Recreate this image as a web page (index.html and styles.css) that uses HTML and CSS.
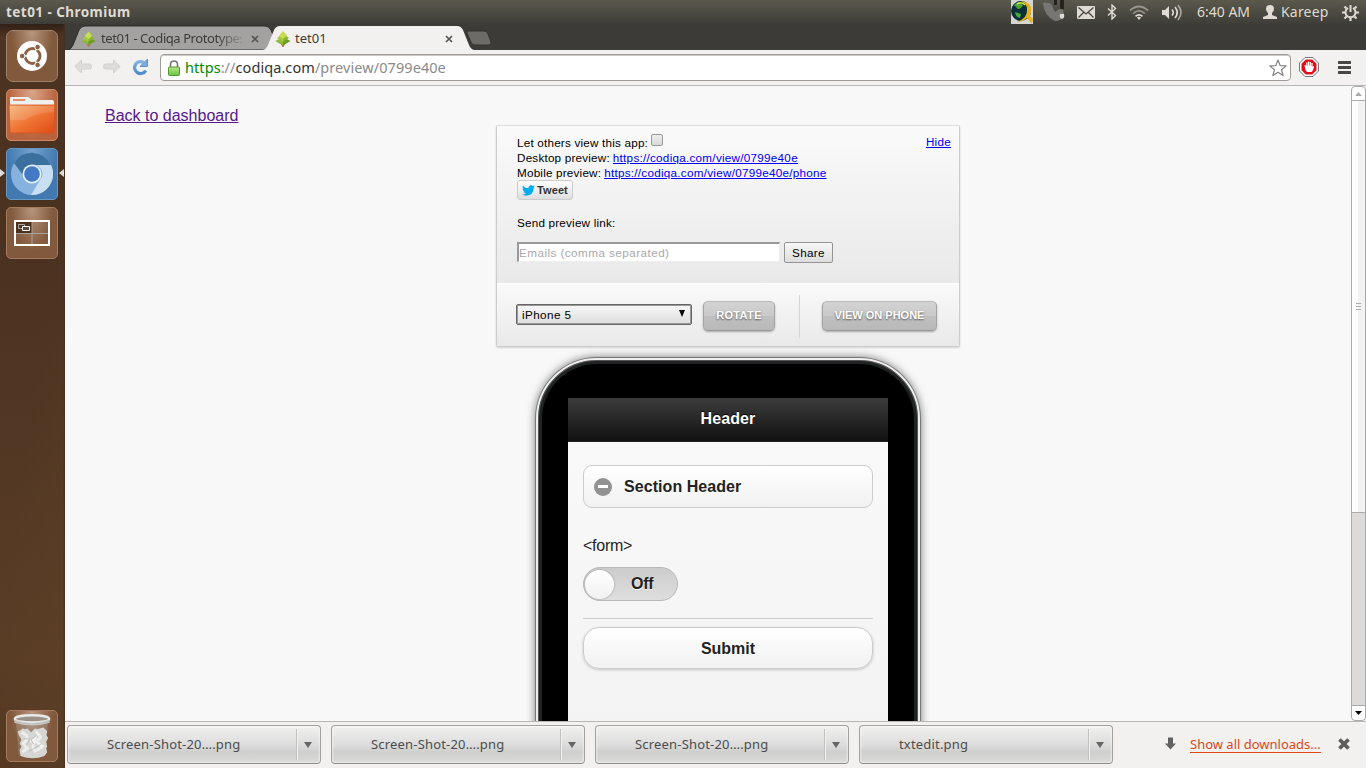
FILE: index.html
```
<!DOCTYPE html>
<html lang="en">
<head>
<meta charset="utf-8">
<title>tet01 - Chromium</title>
<link rel="stylesheet" href="styles.css">
</head>
<body>
<svg class="defs" width="0" height="0">
  <defs>
    <linearGradient id="folderFill" x1="0" y1="0" x2="1" y2="1"><stop offset="0" stop-color="#f5b173"/><stop offset=".5" stop-color="#ef7535"/><stop offset="1" stop-color="#e04a16"/></linearGradient>
    <linearGradient id="reloadFill" x1="0" y1="0" x2="0" y2="1"><stop offset="0" stop-color="#7fb0e2"/><stop offset="1" stop-color="#4f8bcd"/></linearGradient>
    <linearGradient id="lockFill" x1="0" y1="0" x2="0" y2="1"><stop offset="0" stop-color="#b4e88a"/><stop offset="1" stop-color="#6cc043"/></linearGradient>
    <symbol id="leaf" viewBox="0 0 16 16">
      <path d="M5.500 12h5l-2 4h-1z" fill="#b4704a"/>
      <path d="M8 6l7.500 4L8 14.500.5 10z" fill="#6c9c22"/>
      <path d="M8 3l6 4-6 4-6-4z" fill="#8bb92e"/>
      <path d="M8 0l4 4.500L8 8 4 4.500z" fill="#c3dc51"/>
      <path d="M8 0v14L.5 10 3 8 2 7l2.500-2z" fill="#d0e45c" opacity=".4"/>
    </symbol>
    <symbol id="cross" viewBox="0 0 8 8"><path d="M1 1l6 6M7 1L1 7" stroke="#555" stroke-width="1.700"/></symbol>
    <symbol id="arrow" viewBox="0 0 18 16"><path d="M7.500 1L.8 7.500l6.700 6.500V10h8q2 0 2-2.500t-2-2.500h-8z" fill="#dedcda" stroke="#d3d1cf"/></symbol>
  </defs>
</svg>

<header class="panel">
  <span class="panel-title">tet01 - Chromium</span>
  <div class="indicators">
    <svg class="i-globe" width="22" height="24" viewBox="0 0 22 24"><rect width="22" height="24" fill="#d5d5d2"/><circle cx="10" cy="11" r="10" fill="#0b3038"/><path d="M3 5q5-5 9 0-2 4-5 4-3-3-4-4M4 12l6 2-1 4q-4 0-5-6" fill="#4da536"/><path d="M10 1q12 2 10 11l-1 4 3 3-1 4h-1l-4-5q-4 4-10 4 11-4 10-13 0-5-6-8" fill="#e6b21b"/><path d="M6 4q5-3 8 1" stroke="#d6e84b" stroke-width="1.500" fill="none"/></svg>
    <svg class="i-swirl" width="22" height="24" viewBox="0 0 22 24"><path d="M11 0h3v5h-3zM17 0h4v9h-4z" fill="#24231f"/><path d="M0 3q1-1 5 0 4 0 5 5l2 4q5-5 8-2l1 5q-2 6-9 6Q1 16 0 3" fill="#777672"/><path d="M17 14l4 0q1 4-2 5-3-1-2-5" fill="#dedbd2"/></svg>
    <svg class="i-mail" width="18" height="13" viewBox="0 0 18 13"><rect width="18" height="13" rx="1" fill="#dfdbd2"/><path d="M1.500 1.500L9 8l7.500-6.500M1.500 11.500l5-5M16.500 11.500l-5-5" fill="none" stroke="#4a4842" stroke-width="1.300"/></svg>
    <svg class="i-bt" width="10" height="16" viewBox="0 0 10 16"><path d="M1 4.500l7.500 7L5 15V1l3.500 3.500-7.500 7" fill="none" stroke="#dfdbd2" stroke-width="1.400"/></svg>
    <svg class="i-wifi" width="20" height="15" viewBox="0 0 20 15"><g fill="none" stroke="#dfdbd2" stroke-width="1.700"><path d="M1 5.500q9-8 18 0M4 8.700q6-5.500 12 0" opacity=".5"/><path d="M6.500 11.300q3.500-3 7 0"/></g><path d="M8 12.500q2-1.500 4 0L10 15z" fill="#dfdbd2"/></svg>
    <svg class="i-vol" width="20" height="17" viewBox="0 0 20 17"><path d="M0 6h3l4-4v13l-4-4H0z" fill="#dfdbd2"/><g fill="none" stroke="#dfdbd2" stroke-width="1.600"><path d="M10 5.500q2.500 3 0 6M13 3q4.500 5.500 0 11"/><path d="M16 1q6 7.500 0 15" opacity=".65"/></g></svg>
    <span class="clock">6:40 AM</span>
    <svg class="i-user" width="14" height="14" viewBox="0 0 14 14"><path d="M7 0q4 0 4 4 0 2.500-2 4v2l5 2v2H0v-2l5-2V8Q3 6.500 3 4q0-4 4-4" fill="#dfdbd2"/></svg>
    <span class="user">Kareep</span>
    <svg class="i-gear" width="17" height="17" viewBox="0 0 17 17"><g fill="none" stroke="#dfdbd2"><path d="M6 4A5 5 0 1 0 11 4" stroke-width="2"/><path d="M8.500 1v7" stroke-width="2"/><path d="M0 8.500h3M14 8.500h3M2.500 2.500l2 2M14.500 2.500l-2 2M2.500 14.500l2-2M14.500 14.500l-2-2M8.500 14v3" stroke-width="2.200"/></g></svg>
  </div>
</header>

<div class="desktop">
  <nav class="launcher">
    <div class="tile tile-dash"><svg width="30" height="30" viewBox="0 0 30 30"><circle cx="15" cy="15" r="15" fill="#fff"/><circle cx="15.500" cy="15" r="7.500" fill="none" stroke="#8b6243" stroke-width="3"/><path d="M15 15L3 15M15.500 15l6-10.500M15.500 15l6 10.500" stroke="#fff" stroke-width="1.300"/><circle cx="15.500" cy="15" r="5.800" fill="#fff"/><g fill="#8b6243" stroke="#fff"><circle cx="5.200" cy="15" r="2.800"/><circle cx="20.600" cy="6" r="2.800"/><circle cx="20.600" cy="24" r="2.800"/></g></svg></div>
    <div class="tile tile-files"><svg width="46" height="38" viewBox="0 0 46 38"><path d="M1 10V2q0-1 1-1h17l4 3h20q2 0 2 2v4H1z" fill="#f1efed"/><path d="M4 3h12v2H4z" fill="#e4916a"/><path d="M0 9h46l-1 27q0 1-1 1H2q-1 0-1-1z" fill="url(#folderFill)" stroke="#d7531d" stroke-width=".8"/><path d="M1 10h44v6Q25 17 16 24H1z" fill="#fff" opacity=".13"/></svg></div>
    <div class="tile tile-chromium"><svg width="44" height="44" viewBox="0 0 44 44"><circle cx="22" cy="22" r="21" fill="#86b2df"/><path d="M4 11A21 21 0 0 1 41 13H22a9 9 0 0 0-9 10z" fill="#3c709f"/><path d="M41 13A21 21 0 0 1 21 43l9-15a9 9 0 0 0-8-15z" fill="#c9dff1"/><circle cx="22" cy="22" r="9.500" fill="#e4f0fa"/><circle cx="22" cy="22" r="7.800" fill="#4379c5"/></svg></div>
    <div class="tile tile-spaces"><svg width="36" height="26" viewBox="0 0 36 26"><rect x="1" y="1" width="34" height="24" fill="none" stroke="#fff" stroke-width="2"/><path d="M2 2h16v11H2z" fill="#4f321e"/><path d="M18 2v22M2 13.500h32" stroke="#a9a099"/><path d="M4.500 4.500h6v4h-6z" fill="none" stroke="#aaa"/><path d="M8.500 6.500h7v4h-7z" fill="#5b4a3f" stroke="#fff"/></svg></div>
    <div class="tile tile-trash"><svg width="38" height="46" viewBox="0 0 40 48"><path d="M3 8h34l-3 36q-14 5-28 0z" fill="#aaa39d" opacity=".35"/><path d="M5 19l3-1 2-2 3 1 2-1 2 2 2 2 4-4 3 1 2-1 4-1 4 4-1 4 2 3-2 4 1 5-1 2 1 4-3 4q-12 5-25 0l-1-6 2-4-2-3 2-4-3-5z" fill="#d6d7d4"/><path d="M9 20l5 3 1 4-4 5 4 5-5 4M24 19l5 6-4 5 6 5-6 4M18 30l5-3-2 9 3 5" fill="none" stroke="#efefed" stroke-width="3"/><path d="M11 27l7 0-4 7M25 23l-6 5 3 5M30 32l-4 3-9 5" fill="none" stroke="#bfc0bc"/><ellipse cx="20" cy="6" rx="18" ry="3.800" fill="#9b9088" stroke="#e9e9e7" stroke-width="2.500"/><path d="M1.500 7q18 7 37 0v3q-18 6-37 0z" fill="#c3c4c0"/></svg></div>
  </nav>

  <main class="window">
    <div class="tabstrip">
      <svg class="tab-shapes" width="440" height="26" viewBox="0 0 440 26">
        <path d="M0 26q4 0 6-5l6-15q2-4 6-4h180q4 0 6 4l6 15q2 5 6 5z" fill="#a3a2a0" stroke="#2f2e2b"/>
        <path d="M195 26q4 0 6-5l6-15q2-4 6-4h177q4 0 6 4l6 15q2 5 6 5z" fill="#f2f1f0"/>
        <path d="M401 7h16q3 0 4 3l3 8q1 3-2 3h-14q-3 0-4-3l-4-9q0-2 1-2z" fill="#6c6b67" stroke="#33322e"/>
      </svg>
      <div class="tab tab-back"><svg width="15" height="16"><use href="#leaf"/></svg><span class="tab-label faded">tet01 - Codiqa Prototypes</span><svg width="8" height="8"><use href="#cross"/></svg></div>
      <div class="tab tab-front"><svg width="16" height="16"><use href="#leaf"/></svg><span class="tab-label">tet01</span><svg width="8" height="8"><use href="#cross"/></svg></div>
    </div>

    <div class="toolbar">
      <svg class="nav-back" width="18" height="16"><use href="#arrow"/></svg>
      <svg class="nav-forward" width="18" height="16"><use href="#arrow"/></svg>
      <svg class="nav-reload" width="17" height="18" viewBox="0 0 17 18"><path d="M13.800 12.500A6 6 0 1 1 11.500 4.300" fill="none" stroke="url(#reloadFill)" stroke-width="3.200"/><path d="M15.500 1v7.500H8z" fill="#7aabdd" stroke="#5e94cf"/></svg>
      <div class="omnibox">
        <svg width="12" height="16" viewBox="0 0 12 16"><path d="M2.500 8V4.500q0-3.500 3.500-3.500t3.500 3.500V8" fill="none" stroke="#777" stroke-width="1.600"/><rect x=".5" y="7" width="11" height="8.500" rx="1" fill="url(#lockFill)" stroke="#4e9a2e"/></svg>
        <span class="url"><span class="scheme">https</span>://<span class="host">codiqa.com</span>/preview/0799e40e</span>
        <svg width="18" height="18" viewBox="0 0 18 18"><path d="M9 1l2.200 5.600 6 .3-4.700 3.800 1.600 5.900L9 13.300l-5.100 3.300 1.600-5.900L.8 6.900l6-.3z" fill="#fff" stroke="#818181" stroke-width="1.200" stroke-linejoin="round"/></svg>
      </div>
      <svg class="adblock" width="20" height="20" viewBox="0 0 20 20"><path d="M6 .5h8L19.500 6v8L14 19.500H6L.5 14V6z" fill="#fff" stroke="#777"/><path d="M6.800 2.500h6.400l4.300 4.300v6.400l-4.300 4.300H6.800l-4.300-4.300V6.800z" fill="#dc1018"/><path d="M5.500 8.500l1-.5.700 1V5.500h1.200v3h.5V4.500h1.300v4h.5V5h1.200v4h.5V6h1.200v4l1-1 .7.500-1.500 4-1 1.500H8l-1.500-2z" fill="#fff"/></svg>
      <svg class="menu" width="13" height="13" viewBox="0 0 13 13"><path d="M1 1.500h11M1 6.500h11M1 11.500h11" stroke="#464646" stroke-width="3" stroke-linecap="round"/></svg>
    </div>

    <div class="viewport">
      <div class="page">
        <a class="back-link" href="#">Back to dashboard</a>
        <section class="settings">
          <div class="sharing">
            <div class="info">
              <div class="line"><span>Let others view this app:</span><i class="check"></i><a class="hide" href="#">Hide</a></div>
              <div class="line"><span>Desktop preview:</span><a href="#">https://codiqa.com/view/0799e40e</a></div>
              <div class="line"><span>Mobile preview:</span><a href="#">https://codiqa.com/view/0799e40e/phone</a></div>
            </div>
            <div class="tweet"><svg width="13" height="11" viewBox="0 0 24 20"><path d="M24 2.400q-1.500.8-2.800.8Q22.700 2.200 23.300.5q-1.500.9-3.100 1.200A5 5 0 0 0 11.900 6Q5.500 5.700 1.700 1A5 5 0 0 0 3.200 7.500Q2 7.400 1 6.900q0 3.800 3.900 4.900-1 .3-2.200.1 1.200 3.200 4.600 3.400Q4.400 17.800 0 17.400 3.500 19.500 7.500 19.500 21.500 19 21.500 5 22.900 4 24 2.400" fill="#00aced"/></svg><span>Tweet</span></div>
            <div class="send-label">Send preview link:</div>
            <div class="send"><div class="email">Emails (comma separated)</div><div class="share">Share</div></div>
          </div>
          <div class="controls">
            <div class="select"><span>iPhone 5</span><i class="caret"></i></div>
            <div class="btn rotate">ROTATE</div>
            <i class="divider"></i>
            <div class="btn view">VIEW ON PHONE</div>
          </div>
        </section>
        <section class="phone">
          <div class="bezel">
            <div class="screen">
              <div class="app-header">Header</div>
              <div class="app-body">
                <div class="section-header"><svg width="18" height="18" viewBox="0 0 18 18"><circle cx="9" cy="9" r="9" fill="#929292"/><path d="M4 7h10v3H4z" fill="#fff"/></svg><span>Section Header</span></div>
                <div class="form-text">&lt;form&gt;</div>
                <div class="toggle"><i class="knob"></i><span>Off</span></div>
                <div class="submit">Submit</div>
              </div>
            </div>
          </div>
        </section>
      </div>
      <div class="scrollbar">
        <div class="sb-up"><svg width="7" height="4" viewBox="0 0 7 4"><path d="M0 4l3.500-4L7 4z" fill="#aaa"/></svg></div>
        <div class="thumb"><i></i><i></i><i></i></div>
        <div class="track"></div>
        <div class="sb-down"><svg width="7" height="4" viewBox="0 0 7 4"><path d="M0 0l3.500 4L7 0z" fill="#000"/></svg></div>
      </div>
    </div>

    <footer class="downloads">
      <div class="download"><span>Screen-Shot-20….png</span><i class="sep"></i><i class="drop"></i></div>
      <div class="download"><span>Screen-Shot-20….png</span><i class="sep"></i><i class="drop"></i></div>
      <div class="download"><span>Screen-Shot-20….png</span><i class="sep"></i><i class="drop"></i></div>
      <div class="download"><span>txtedit.png</span><i class="sep"></i><i class="drop"></i></div>
      <svg class="dl-icon" width="11" height="13" viewBox="0 0 11 13"><path d="M3 .5h5v6h3L5.500 12.500 0 6.500h3z" fill="#626262"/></svg>
      <a class="show-all" href="#">Show all downloads...</a>
      <svg class="dl-close" width="12" height="12" viewBox="0 0 12 12"><path d="M1.500 1.500l9 9M10.500 1.500l-9 9" stroke="#5c5c5c" stroke-width="3.800"/></svg>
    </footer>
  </main>
</div>
</body>
</html>
```
FILE: styles.css
```
* { box-sizing: border-box; }
body { margin: 0; width: 1366px; height: 768px; overflow: hidden; font: 13px "Noto Sans", sans-serif; background: #f2f1f0; }
svg { display: block; flex: none; }
.defs { position: absolute; }

.panel { height: 24px; display: flex; align-items: center; justify-content: space-between; padding: 0 7px 0 6px; background: linear-gradient(#5b594c, #3e3d38); color: #dfdbd2; }
.panel-title { font-weight: 700; font-size: 13.500px; letter-spacing: .45px; white-space: nowrap; }
.indicators { display: flex; align-items: center; height: 24px; }
.i-swirl { margin-left: 10px; }
.i-mail { margin-left: 12px; }
.i-bt { margin-left: 12px; }
.i-wifi { margin-left: 12px; }
.i-vol { margin-left: 13px; }
.clock { width: 53px; margin: -2px 0 0 15px; font-size: 14px; white-space: nowrap; }
.i-user { margin-left: 13px; }
.user { width: 47px; margin: -2px 0 0 4px; font-size: 14px; letter-spacing: .2px; white-space: nowrap; }
.i-gear { margin-left: 14px; }

.desktop { display: flex; height: 744px; }
.launcher { width: 65px; flex: none; padding: 6px; display: flex; flex-direction: column; gap: 7px; position: relative;
  background: linear-gradient(90deg, transparent 63px, #46301f 65px), linear-gradient(180deg, #302116 0, transparent 12px), linear-gradient(99deg, transparent 50%, rgba(95,66,38,.4) 100%), linear-gradient(180deg, #4c3322 0, #4b311f 30%, #533824 60%, #5a3d25 85%, #543722 100%); }
.tile { width: 52px; height: 52px; flex: none; border-radius: 5px; display: flex; align-items: center; justify-content: center; border: 1px solid #a57b5d; background: radial-gradient(ellipse at 50% 0, #b8957d 0, transparent 60%), #81593c; }
.tile-dash { border-radius: 7px; border-color: #a08066; }
.tile-files { background: radial-gradient(ellipse at 50% 0, #daa68b 0, transparent 70%), #b8633d; border-color: #d18a68; }
.tile-chromium { background: radial-gradient(ellipse at 50% 0, #75a3cd 0, transparent 70%), #4179b0; border-color: #6798c5; }
.tile-trash { margin-top: auto; }
.launcher::before, .launcher::after { content: ""; position: absolute; top: 145px; border: 4px solid transparent; }
.launcher::before { left: 0; border-left: 5px solid #ddd; border-right: 0; }
.launcher::after { right: 1px; border-right: 5px solid #ddd; border-left: 0; }

.window { flex: 1; min-width: 0; display: flex; flex-direction: column; }
.tabstrip { height: 26px; flex: none; position: relative; display: flex; background: #3c3b37; }
.tab-shapes { position: absolute; left: 2px; top: 0; }
.tab { position: relative; display: flex; align-items: center; height: 26px; padding-top: 3px; color: #3c3b37; }
.tab-back { width: 194px; padding-left: 16px; }
.tab-front { width: 194px; padding-left: 16px; }
.tab-label { margin: -2px 9px 0 4px; flex: 1; width: 0; white-space: nowrap; font-size: 13px; }
.tab-back .tab-label { letter-spacing: -.43px; font-size: 13px; margin-left: 5px; }
.faded { -webkit-mask-image: linear-gradient(90deg, #000 115px, transparent 146px); mask-image: linear-gradient(90deg, #000 115px, transparent 146px); }

.toolbar { height: 36px; flex: none; display: flex; align-items: center; padding: 0 15px 1px 9px; background: #f2f1f0; border-bottom: 1px solid #b8b7b5; }
.nav-forward { margin-left: 11px; transform: scaleX(-1); }
.nav-reload { margin-left: 11px; }
.omnibox { width: 1131px; height: 27px; margin: 1px 0 0 11px; border: 1px solid #9f9c98; border-radius: 4px; background: #fff; display: flex; align-items: center; padding: 0 3px 0 7px; box-shadow: inset 0 1px 0 #ccc9c6; }
.url { flex: 1; margin: -1px 0 0 5px; color: #8b8b8b; font-size: 14.500px; letter-spacing: .07px; white-space: nowrap; }
.scheme { color: #080; }
.host { color: #333; }
.adblock { margin-left: 8px; }
.menu { margin-left: auto; }

.viewport { height: 635px; flex: none; overflow: hidden; display: flex; background: #f8f8f8; }
.page { flex: 1; height: 635px; overflow: hidden; padding: 20px 0 0 40px; display: flex; flex-direction: column; font-family: "Liberation Sans", Arial, sans-serif; }
.back-link { font-size: 16px; line-height: 20px; height: 19px; color: #551a8b; width: 140px; white-space: nowrap; }
.settings { width: 464px; height: 222px; flex: none; align-self: center; border: 1px solid #ccc; border-top-color: #dfdfdf; border-radius: 2px; box-shadow: 0 1px 2px rgba(0,0,0,.15); font-size: 11.700px; letter-spacing: .2px; color: #000; }
.settings a { color: #00e; letter-spacing: .26px; }
.sharing { height: 157px; padding: 9px 8px 0 20px; background: linear-gradient(#fafafa, #e9e9e9); }
.line { height: 15px; line-height: 16px; display: flex; gap: 3px; white-space: nowrap; }
.check { width: 12px; height: 12px; margin-top: -1px; border: 1px solid #999; border-radius: 2px; background: linear-gradient(#eee, #d9d9d9); }
.settings .hide { margin: -1px 0 0 auto; }
.tweet { width: 56px; height: 20px; border: 1px solid #ccc; border-radius: 3px; background: linear-gradient(#fff, #dedede); display: flex; align-items: center; gap: 2px; padding-left: 4px; font-size: 11px; font-weight: 700; color: #333; letter-spacing: .1px; }
.send-label { margin-top: 15px; line-height: 15px; height: 16px; }
.send { display: flex; gap: 4px; margin-top: 11px; }
.email { width: 263px; height: 20px; border: solid; border-width: 2px 1px 1px 2px; border-color: #999 #eee #eee #999; background: #fff; color: #a9a9a9; line-height: 18px; letter-spacing: .45px; }
.share { width: 49px; height: 21px; border: 1px solid #949494; border-radius: 2px; background: linear-gradient(#f7f7f7, #ddd); line-height: 20px; text-align: center; letter-spacing: .35px; }
.controls { height: 63px; display: flex; padding: 12px 0 0 19px; background: linear-gradient(#fafafa, #e9e9e9); }
.select { width: 176px; height: 21px; margin-top: 9px; border: 1px solid #666; border-radius: 2px; background: linear-gradient(#f8f8f8, #ddd); display: flex; justify-content: space-between; align-items: center; padding: 0 6px 0 5px; box-shadow: inset 0 0 0 1px #999; letter-spacing: .4px; }
.caret { border: solid transparent; border-width: 7px 3.500px 0; border-top-color: #000; margin-bottom: 2px; }
.btn { height: 30px; margin-top: 6px; border: 1px solid #aaa; border-color: #bbb #a5a5a5 #999; border-radius: 5px; background: linear-gradient(#d3d3d3, #c9c9c9 50%, #c0c0c0 51%, #b9b9b9); box-shadow: 0 1px 2px rgba(0,0,0,.3); color: #fff; text-shadow: 0 1px 2px #555; font-size: 11px; line-height: 27px; font-weight: 700; letter-spacing: 0; text-align: center; white-space: nowrap; }
.rotate { width: 72px; margin-left: 11px; letter-spacing: .35px; }
.divider { width: 1px; height: 43px; background: #d5d5d5; margin-left: 24px; }
.view { width: 115px; margin-left: 22px; }

.phone { width: 386px; height: 700px; flex: none; align-self: center; margin-top: 10px; border-radius: 62px; padding: 1px; background: #777; box-shadow: 0 0 9px rgba(0,0,0,.5); }
.bezel { height: 698px; border-radius: 61px; border: 2px solid #eee; background: #000; box-shadow: inset 0 0 0 1px #555, inset 0 0 0 4px #202323; padding: 38px 30px 0; }
.screen { width: 320px; height: 568px; background: #f9f9f9; }
.app-header { height: 44px; background: linear-gradient(#3c3c3c, #111); border-bottom: 1px solid #222; color: #fff; font-size: 16px; font-weight: 700; line-height: 41px; text-align: center; text-shadow: 0 -1px 0 #000; letter-spacing: .1px; }
.app-body { height: 524px; padding: 23px 15px 0; background: linear-gradient(#f9f9f9, #eee); color: #222; font-size: 16px; text-shadow: 0 1px 0 #fff; }
.section-header { height: 43px; border: 1px solid #ccc; border-radius: 9px; background: linear-gradient(#fff, #f1f1f1); display: flex; align-items: center; gap: 12px; padding-left: 10px; font-weight: 700; letter-spacing: .06px; }
.form-text { margin-top: 28px; height: 20px; line-height: 20px; letter-spacing: -.25px; }
.toggle { width: 95px; height: 34px; margin-top: 11px; border: 1px solid #b9b9b9; border-radius: 17px; background: linear-gradient(#ccc, #dedede); display: flex; align-items: center; padding-left: 1px; gap: 17px; font-weight: 700; letter-spacing: -.3px; }
.knob { width: 29px; height: 29px; border-radius: 50%; background: linear-gradient(#fff, #f1f1f1); box-shadow: 0 0 2px #888; }
.submit { height: 51px; margin-top: 17px; position: relative; padding-top: 9px; border-top: 1px solid #ccc; line-height: 41px; text-align: center; font-weight: 700; z-index: 0; }
.submit::before { content: ""; position: absolute; z-index: -1; inset: 8px 0 0; border: 1px solid #ccc; border-radius: 16px; background: linear-gradient(#fff, #f1f1f1); box-shadow: 0 1px 3px rgba(0,0,0,.2); }

.scrollbar { width: 15px; flex: none; border: 1px solid #aaa; border-radius: 4px; display: flex; flex-direction: column; background: #fff; }
.sb-up, .sb-down { height: 14px; flex: none; display: grid; place-items: center; }
.sb-up { border-bottom: 1px solid #aaa; }
.thumb { height: 412px; flex: none; background: linear-gradient(90deg, #fff 50%, #f2f2f2 50%); display: flex; flex-direction: column; justify-content: center; align-items: center; gap: 2px; border-bottom: 1px solid #aaa; }
.thumb i { width: 5px; height: 1px; background: #aaa; }
.track { flex: 1; background: #dcdbda; border-bottom: 1px solid #aaa; }

.downloads { height: 47px; flex: none; border-top: 1px solid #b8b7b5; display: flex; padding: 3px 0 0 2px; gap: 10px; color: #4c4c4c; background: #f2f1f0; }
.download { width: 254px; height: 39px; flex: none; border: 1px solid #a2a2a1; border-bottom-color: #8e8e8c; border-radius: 4px; background: linear-gradient(#f1f1f0, #ddd 50%, #cfcfce 70%, #dadad9); box-shadow: inset 0 0 3px #fff; display: flex; align-items: center; }
.download span { width: 189px; flex: none; padding-left: 39px; white-space: nowrap; font-size: 13px; letter-spacing: .18px; line-height: 36px; height: 37px; }
.sep { margin-left: 39px; width: 2px; height: 31px; background: #c2c2c1; border-right: 1px solid #f1f1f0; }
.drop { margin-left: 6px; border: solid transparent; border-width: 6px 4px 0; border-top-color: #666; }
.dl-icon { margin: 12px 0 0 42px; }
.show-all { margin-left: 4px; margin-top: 12px; height: 16px; width: 131px; line-height: 15px; border-bottom: 1px solid #dd4814; text-decoration: none; color: #dd4814; white-space: nowrap; }
.dl-close { margin: 13px 0 0 7px; }
```
